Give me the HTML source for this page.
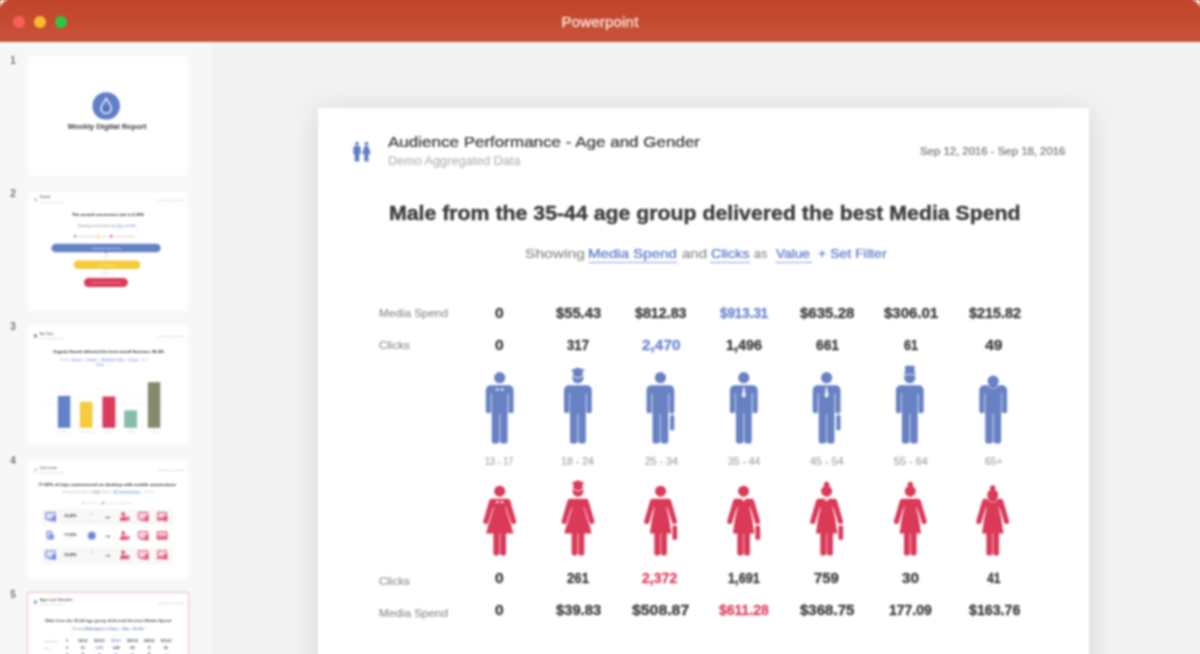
<!DOCTYPE html>
<html lang="en">
<head>
<meta charset="utf-8">
<title>Powerpoint</title>
<style>
*{box-sizing:border-box;margin:0;padding:0}
html,body{width:1200px;height:654px;overflow:hidden;background:#fff}
body{font-family:"Liberation Sans",sans-serif;position:relative}
.stage{position:absolute;left:-10px;top:-10px;width:1220px;height:684px;filter:blur(.9px)}
.ext{position:absolute;left:0;top:0;width:1220px;height:684px;background:linear-gradient(90deg,#f7f7f7 222px,#f2f2f2 222px)}
.tbx{position:absolute;left:0;top:0;width:1220px;height:51.6px;background:linear-gradient(#c0442a 10px,#c8533a)}
.hl{position:absolute;left:0;top:51.6px;width:1220px;height:6px;background:linear-gradient(rgba(255,255,255,.6),rgba(255,255,255,0))}
.cm{position:absolute;top:10px}
.win{position:absolute;left:10px;top:10px;width:1200px;height:674px}
.tb{position:absolute;left:0;top:0;width:1200px;height:41px}
.tb .t{position:absolute;left:0;width:1200px;top:13.6px;text-align:center;font-size:15px;line-height:16px;letter-spacing:.2px;color:#fde9e2;-webkit-text-stroke:.25px}
.dot{position:absolute;top:15.5px;width:12px;height:12px;border-radius:50%}
.side{position:absolute;left:0;top:41px;width:212px;height:633px}
.num{position:absolute;left:8px;width:10px;text-align:center;font-size:10px;line-height:12px;font-weight:bold;color:#747474}
.th{position:absolute;left:28px;width:160px;height:118px;background:#fff;overflow:hidden}
.abs{position:absolute}
.slide{position:absolute;left:318px;top:108px;width:771px;height:570px;background:#fff;box-shadow:0 3px 26px rgba(0,0,0,.12)}
.slide,.mini,.tb .t,.num{will-change:transform}
.slide div,.mini div{position:absolute;white-space:nowrap}
.x{line-height:0;transform-origin:0 0;-webkit-text-stroke:.2px}
.b{font-weight:bold;-webkit-text-stroke:.35px}
</style>
</head>
<body>
<div class="stage">
<div class="ext"></div>
<div class="tbx"></div>
<div class="hl"></div>
<svg class="cm" style="left:10px" width="9" height="9" viewBox="0 0 9 9"><path d="M0 0h9A9 9 0 0 0 0 9z" fill="#fff"/></svg>
<svg class="cm" style="left:1201px" width="9" height="9" viewBox="0 0 9 9"><path d="M9 0H0a9 9 0 0 1 9 9z" fill="#fff"/></svg>
<div class="win">
  <div class="tb">
    <div class="dot" style="left:13px;background:#f9605a"></div>
    <div class="dot" style="left:33.6px;background:#fbbb2d"></div>
    <div class="dot" style="left:55px;background:#29c840"></div>
    <div class="t">Powerpoint</div>
  </div>
  <div class="side">
    <div class="num" style="top:13.8px">1</div>
    <div class="th" style="top:15px;height:120px" id="t1">
<div class="mini" style="position:absolute;left:0;top:0;width:772px;height:600px;transform:scale(.2073);transform-origin:0 0">
<svg style="position:absolute;left:310.2px;top:174.1px" width="134.1" height="134.1" viewBox="0 0 28 28"><circle cx="14" cy="14" r="13.9" fill="#5f7fc8"/><path d="M14 6.6c-1.6 3.4-5.2 6-5.2 9.7a5.2 5.2 0 0 0 10.4 0c0-3.7-3.6-6.3-5.2-9.7z" fill="none" stroke="#fff" stroke-opacity=".88" stroke-width="1.5"/><circle cx="14" cy="16.4" r="2.3" fill="#4f6fba"/></svg>
<div class="x b" style="left:192.47px;top:341.22px;font-size:34px;color:#444;transform:scaleX(1.0877)">Weekly Digital Report</div>
</div>
</div>
    <div class="num" style="top:146.5px">2</div>
    <div class="th" style="top:151px;height:118.6px" id="t2">
<div class="mini" style="position:absolute;left:0;top:0;width:772px;height:600px;transform:scale(.2073);transform-origin:0 0">
<div style="left:28.0px;top:28.5px;width:16.4px;height:17.8px;background:#cfcfd8;border-radius:8px;"></div>
<div style="left:428.8px;top:174.1px;width:39.1px;height:1.4px;background:#a9b8e6;border-radius:0px;"></div>
<div style="left:221.9px;top:207.9px;width:9.6px;height:11.6px;background:#5f7fc8;border-radius:2px;"></div>
<div style="left:334.3px;top:207.9px;width:11.1px;height:11.6px;background:#f4cf3d;border-radius:2px;"></div>
<div style="left:395.6px;top:207.9px;width:10.6px;height:11.6px;background:#dc3c5a;border-radius:2px;"></div>
<div style="left:112.9px;top:249.9px;width:526.8px;height:41.5px;background:#6482c6;border-radius:30px;"></div>
<div style="left:369.5px;top:291.4px;width:0;height:0;border-left:7.7px solid transparent;border-right:7.7px solid transparent;border-top:7.7px solid #4f6cb4"></div>
<div style="left:221.4px;top:329.5px;width:320.3px;height:41.5px;background:#f6cb3c;border-radius:30px;"></div>
<div style="left:369.5px;top:371.0px;width:0;height:0;border-left:7.7px solid transparent;border-right:7.7px solid transparent;border-top:7.7px solid #d9ae22"></div>
<div style="left:270.1px;top:414.9px;width:212.3px;height:43.4px;background:#dc3a5a;border-radius:30px;"></div>
<div class="x" style="left:56.80px;top:25.44px;font-size:15px;color:#555;transform:scaleX(1.0833)">Funnel</div>
<div class="x" style="left:57.89px;top:47.57px;font-size:12px;color:#c4c4c4;transform:scaleX(0.9350)">Demo Aggregated Data</div>
<div class="x" style="left:627.11px;top:39.80px;font-size:10.5px;color:#b5b5b5;transform:scaleX(0.9330)">Sep 12, 2016 - Sep 18, 2016</div>
<div class="x b" style="left:212.25px;top:107.73px;font-size:20px;color:#404040;transform:scaleX(1.0073)">The overall conversion rate is 0.18%</div>
<div class="x" style="left:241.20px;top:166.76px;font-size:13.5px;color:#9a9a9a;transform:scaleX(1.1615)">Showing funnel metrics by</div>
<div class="x" style="left:428.85px;top:166.76px;font-size:13.5px;color:#7d95d8;transform:scaleX(0.8908)">Value + Set Filter</div>
<div class="x" style="left:235.84px;top:213.64px;font-size:11px;color:#b5b5b5;transform:scaleX(1.5014)">Impressions</div>
<div class="x" style="left:352.15px;top:213.64px;font-size:11px;color:#b5b5b5;transform:scaleX(1.2128)">Clicks</div>
<div class="x" style="left:412.45px;top:213.64px;font-size:11px;color:#b5b5b5;transform:scaleX(1.7061)">Conversions</div>
<div class="x b" style="left:308.73px;top:270.92px;font-size:12px;color:#dfe6f7;transform:scaleX(1.0952)">2,481,043 Impressions</div>
<div class="x" style="left:356.97px;top:311.38px;font-size:10.5px;color:#c9c9c9;transform:scaleX(1.3110)">1.32%</div>
<div class="x b" style="left:340.09px;top:350.51px;font-size:12px;color:#fdf3c8;transform:scaleX(1.0830)">32,749 Clicks</div>
<div class="x" style="left:350.22px;top:391.46px;font-size:10.5px;color:#bdbdbd;transform:scaleX(1.5896)">13.6%</div>
<div class="x b" style="left:306.32px;top:436.86px;font-size:12px;color:#f3a5b4;transform:scaleX(1.3151)">4,454 Conversions</div>
</div>
</div>
    <div class="num" style="top:280px">3</div>
    <div class="th" style="top:283.5px;height:120.5px" id="t3">
<div class="mini" style="position:absolute;left:0;top:0;width:772px;height:600px;transform:scale(.2073);transform-origin:0 0">
<div style="left:28.0px;top:43.9px;width:16.4px;height:17.8px;background:#7c93d6;border-radius:8px;"></div>
<div style="left:212.3px;top:176.6px;width:48.2px;height:1.9px;background:#a9b8e6;border-radius:0px;"></div>
<div style="left:283.2px;top:176.6px;width:44.9px;height:1.9px;background:#a9b8e6;border-radius:0px;"></div>
<div style="left:357.0px;top:176.6px;width:106.1px;height:1.9px;background:#a9b8e6;border-radius:0px;"></div>
<div style="left:482.4px;top:176.6px;width:48.2px;height:1.9px;background:#a9b8e6;border-radius:0px;"></div>
<div style="left:76.7px;top:268.5px;width:598.6px;height:1.7px;background:#ececec;border-radius:0px;"></div>
<div style="left:76.7px;top:327.3px;width:598.6px;height:1.7px;background:#ececec;border-radius:0px;"></div>
<div style="left:76.7px;top:382.3px;width:598.6px;height:1.7px;background:#ececec;border-radius:0px;"></div>
<div style="left:76.7px;top:436.8px;width:598.6px;height:1.7px;background:#ececec;border-radius:0px;"></div>
<div style="left:76.7px;top:492.8px;width:598.6px;height:1.7px;background:#ececec;border-radius:0px;"></div>
<div style="left:143.8px;top:341.5px;width:59.8px;height:154.8px;background:#6482c6;border-radius:0px;"></div>
<div style="left:250.4px;top:370.5px;width:60.8px;height:125.9px;background:#f6cb3c;border-radius:0px;"></div>
<div style="left:358.9px;top:344.9px;width:61.7px;height:151.5px;background:#dc3a5a;border-radius:0px;"></div>
<div style="left:464.1px;top:412.0px;width:61.7px;height:84.4px;background:#86bcae;border-radius:0px;"></div>
<div style="left:577.9px;top:276.4px;width:59.8px;height:220.0px;background:#848a6c;border-radius:0px;"></div>
<div class="x" style="left:56.88px;top:40.87px;font-size:15px;color:#555;transform:scaleX(1.0021)">Bar Chart</div>
<div class="x" style="left:57.89px;top:63.01px;font-size:12px;color:#c4c4c4;transform:scaleX(0.9350)">Demo Aggregated Data</div>
<div class="x" style="left:627.11px;top:55.23px;font-size:10.5px;color:#b5b5b5;transform:scaleX(0.9330)">Sep 12, 2016 - Sep 18, 2016</div>
<div class="x b" style="left:122.05px;top:126.06px;font-size:20px;color:#404040;transform:scaleX(0.9533)">Organic Search delivered the best overall Sessions: 45,291</div>
<div class="x" style="left:154.37px;top:170.62px;font-size:13.5px;color:#c4c4c4;transform:scaleX(0.9972)">Showing</div>
<div class="x" style="left:212.25px;top:170.62px;font-size:13.5px;color:#7d95d8;transform:scaleX(0.8766)">Sessions</div>
<div class="x" style="left:266.28px;top:170.62px;font-size:13.5px;color:#c4c4c4;transform:scaleX(0.7980)">by</div>
<div class="x" style="left:283.16px;top:170.62px;font-size:13.5px;color:#7d95d8;transform:scaleX(0.8921)">Channel</div>
<div class="x" style="left:334.78px;top:170.62px;font-size:13.5px;color:#c4c4c4;transform:scaleX(0.9494)">for</div>
<div class="x" style="left:356.97px;top:170.62px;font-size:13.5px;color:#7d95d8;transform:scaleX(0.9824)">All Website Traffic</div>
<div class="x" style="left:467.92px;top:170.62px;font-size:13.5px;color:#c4c4c4;transform:scaleX(0.7315)">as</div>
<div class="x" style="left:482.39px;top:170.62px;font-size:13.5px;color:#7d95d8;transform:scaleX(1.0484)">Column</div>
<div class="x" style="left:537.87px;top:170.62px;font-size:13.5px;color:#d0d0d0;transform:scaleX(0.6709)">+ Set Filter</div>
<div class="x" style="left:326.58px;top:191.84px;font-size:13.5px;color:#8ea3de;transform:scaleX(1.1688)">Value</div>
<div class="x" style="left:151.95px;top:512.38px;font-size:10px;color:#d2d2d2;transform:scaleX(1.6486)">Direct</div>
<div class="x" style="left:241.20px;top:512.38px;font-size:10px;color:#d2d2d2;transform:scaleX(1.1550)">Organic Search</div>
<div class="x" style="left:364.21px;top:512.38px;font-size:10px;color:#d2d2d2;transform:scaleX(1.4331)">Referral</div>
<div class="x" style="left:472.74px;top:512.38px;font-size:10px;color:#d2d2d2;transform:scaleX(1.6071)">Social</div>
<div class="x" style="left:586.11px;top:512.38px;font-size:10px;color:#d2d2d2;transform:scaleX(1.7518)">Email</div>
</div>
</div>
    <div class="num" style="top:414px">4</div>
    <div class="th" style="top:419px;height:118.6px" id="t4">
<div class="mini" style="position:absolute;left:0;top:0;width:772px;height:600px;transform:scale(.2073);transform-origin:0 0">
<div style="left:28.0px;top:40.0px;width:16.4px;height:17.8px;background:#d2d2da;border-radius:8px;"></div>
<div style="left:308.7px;top:159.7px;width:41.5px;height:1.9px;background:#a9b8e6;border-radius:0px;"></div>
<div style="left:412.4px;top:159.7px;width:129.3px;height:1.9px;background:#a9b8e6;border-radius:0px;"></div>
<div style="left:261.5px;top:201.6px;width:6.8px;height:10.6px;background:#a9b8e6;border-radius:2px;"></div>
<div style="left:358.9px;top:200.7px;width:6.8px;height:12.5px;background:#e0466a;border-radius:2px;"></div>
<div style="left:67.5px;top:237.8px;width:633.4px;height:74.3px;background:#f8f8f8;border-radius:14px;"></div>
<div style="left:67.5px;top:421.1px;width:633.4px;height:80.6px;background:#f8f8f8;border-radius:14px;"></div>
<svg style="position:absolute;left:79.6px;top:248.4px" width="62.7" height="53.1" viewBox="0 0 13 11"><rect x="1" y="1" width="9.6" height="6.8" rx=".8" fill="#dde3f8" stroke="#7488d8" stroke-width="1.1"/><rect x="3.4" y="8.6" width="4.8" height="1" fill="#7488d8"/><rect x="7.8" y="4.6" width="3.6" height="5.4" rx=".6" fill="#7488d8"/></svg>
<div style="left:180.9px;top:286.1px;width:48.2px;height:2.4px;background:#e2e2e2;border-radius:0px;"></div>
<div style="left:300.5px;top:252.8px;width:9.2px;height:16.4px;background:#dcdce4;border-radius:3px;"></div>
<div style="left:275.0px;top:295.2px;width:60.3px;height:2.9px;background:#e9e9e9;border-radius:0px;"></div>
<div style="left:371.4px;top:276.2px;width:17.4px;height:3.4px;background:#6e6e6e;border-radius:0px;"></div>
<div style="left:385.9px;top:270.1px;width:0;height:0;border-top:7.7px solid transparent;border-bottom:7.7px solid transparent;border-left:11.6px solid #6e6e6e"></div>
<svg style="position:absolute;left:438.0px;top:248.4px" width="62.7" height="53.1" viewBox="0 0 13 11"><circle cx="4.4" cy="2.6" r="2" fill="#e3587a"/><path d="M1 9.6c0-3 1.4-4.6 3.4-4.6s3.4 1.6 3.4 4.6z" fill="#e3587a"/><rect x="5.6" y="5.2" width="5.2" height="4.2" rx=".6" fill="#e3587a" fill-opacity=".8"/></svg>
<div style="left:439.5px;top:301.0px;width:59.8px;height:2.4px;background:#efe3e6;border-radius:0px;"></div>
<svg style="position:absolute;left:526.8px;top:248.4px" width="62.7" height="53.1" viewBox="0 0 13 11"><rect x="1" y="1" width="9.6" height="6.8" rx=".8" fill="#fad7df" stroke="#e3587a" stroke-width="1.1"/><rect x="3.4" y="8.6" width="4.8" height="1" fill="#e3587a"/><rect x="7.8" y="4.6" width="3.6" height="5.4" rx=".6" fill="#e3587a"/></svg>
<div style="left:528.2px;top:301.0px;width:59.8px;height:2.4px;background:#efe3e6;border-radius:0px;"></div>
<svg style="position:absolute;left:618.4px;top:248.4px" width="62.7" height="53.1" viewBox="0 0 13 11"><rect x="1.6" y="1" width="8.6" height="6" rx=".7" fill="#fad7df" stroke="#e3587a" stroke-width="1.1"/><rect x=".4" y="7.6" width="11" height="1.6" rx=".6" fill="#e3587a"/><rect x="7.6" y="4.4" width="3.8" height="5.4" rx=".6" fill="#e3587a"/></svg>
<div style="left:619.9px;top:301.0px;width:59.8px;height:2.4px;background:#efe3e6;border-radius:0px;"></div>
<svg style="position:absolute;left:79.6px;top:340.1px" width="62.7" height="53.1" viewBox="0 0 13 11"><rect x="2.6" y=".6" width="4.6" height="7.6" rx=".9" fill="#dde3f8" stroke="#7488d8" stroke-width="1.1"/><circle cx="6.8" cy="6.6" r="3" fill="#7488d8" fill-opacity=".75"/></svg>
<div style="left:180.9px;top:377.7px;width:48.2px;height:2.4px;background:#e2e2e2;border-radius:0px;"></div>
<div style="left:287.5px;top:345.4px;width:39.6px;height:39.6px;border-radius:50%;background:#6f83d6;box-shadow:inset 0 0 0 5.8px #98a7e3"></div>
<div style="left:371.4px;top:367.8px;width:17.4px;height:3.4px;background:#6e6e6e;border-radius:0px;"></div>
<div style="left:385.9px;top:361.8px;width:0;height:0;border-top:7.7px solid transparent;border-bottom:7.7px solid transparent;border-left:11.6px solid #6e6e6e"></div>
<svg style="position:absolute;left:438.0px;top:340.1px" width="62.7" height="53.1" viewBox="0 0 13 11"><circle cx="4.4" cy="2.6" r="2" fill="#e3587a"/><path d="M1 9.6c0-3 1.4-4.6 3.4-4.6s3.4 1.6 3.4 4.6z" fill="#e3587a"/><rect x="5.6" y="5.2" width="5.2" height="4.2" rx=".6" fill="#e3587a" fill-opacity=".8"/></svg>
<svg style="position:absolute;left:526.8px;top:340.1px" width="62.7" height="53.1" viewBox="0 0 13 11"><rect x="1" y="1" width="9.6" height="6.8" rx=".8" fill="#fad7df" stroke="#e3587a" stroke-width="1.1"/><rect x="3.4" y="8.6" width="4.8" height="1" fill="#e3587a"/><rect x="7.8" y="4.6" width="3.6" height="5.4" rx=".6" fill="#e3587a"/></svg>
<svg style="position:absolute;left:618.4px;top:340.1px" width="62.7" height="53.1" viewBox="0 0 13 11"><rect x="1" y="1.4" width="10" height="7.4" rx=".9" fill="#fad7df" stroke="#e3587a" stroke-width="1.1"/><rect x="1" y="5" width="10" height="3.8" fill="#e3587a" fill-opacity=".8"/></svg>
<svg style="position:absolute;left:79.6px;top:433.2px" width="62.7" height="53.1" viewBox="0 0 13 11"><rect x="1" y="1" width="9.6" height="6.8" rx=".8" fill="#dde3f8" stroke="#7488d8" stroke-width="1.1"/><rect x="3.4" y="8.6" width="4.8" height="1" fill="#7488d8"/><rect x="7.8" y="4.6" width="3.6" height="5.4" rx=".6" fill="#7488d8"/></svg>
<div style="left:180.9px;top:470.8px;width:48.2px;height:2.4px;background:#e2e2e2;border-radius:0px;"></div>
<div style="left:300.5px;top:437.5px;width:9.2px;height:16.4px;background:#dcdce4;border-radius:3px;"></div>
<div style="left:275.0px;top:480.0px;width:60.3px;height:2.9px;background:#e9e9e9;border-radius:0px;"></div>
<div style="left:371.4px;top:460.9px;width:17.4px;height:3.4px;background:#6e6e6e;border-radius:0px;"></div>
<div style="left:385.9px;top:454.9px;width:0;height:0;border-top:7.7px solid transparent;border-bottom:7.7px solid transparent;border-left:11.6px solid #6e6e6e"></div>
<svg style="position:absolute;left:438.0px;top:433.2px" width="62.7" height="53.1" viewBox="0 0 13 11"><circle cx="4.4" cy="2.6" r="2" fill="#e3587a"/><path d="M1 9.6c0-3 1.4-4.6 3.4-4.6s3.4 1.6 3.4 4.6z" fill="#e3587a"/><rect x="5.6" y="5.2" width="5.2" height="4.2" rx=".6" fill="#e3587a" fill-opacity=".8"/></svg>
<div style="left:439.5px;top:485.8px;width:59.8px;height:2.4px;background:#efe3e6;border-radius:0px;"></div>
<svg style="position:absolute;left:526.8px;top:433.2px" width="62.7" height="53.1" viewBox="0 0 13 11"><rect x="1" y="1" width="9.6" height="6.8" rx=".8" fill="#fad7df" stroke="#e3587a" stroke-width="1.1"/><rect x="3.4" y="8.6" width="4.8" height="1" fill="#e3587a"/><rect x="7.8" y="4.6" width="3.6" height="5.4" rx=".6" fill="#e3587a"/></svg>
<div style="left:528.2px;top:485.8px;width:59.8px;height:2.4px;background:#efe3e6;border-radius:0px;"></div>
<svg style="position:absolute;left:618.4px;top:433.2px" width="62.7" height="53.1" viewBox="0 0 13 11"><rect x="1.6" y="1" width="8.6" height="6" rx=".7" fill="#fad7df" stroke="#e3587a" stroke-width="1.1"/><rect x=".4" y="7.6" width="11" height="1.6" rx=".6" fill="#e3587a"/><rect x="7.6" y="4.4" width="3.8" height="5.4" rx=".6" fill="#e3587a"/></svg>
<div style="left:619.9px;top:485.8px;width:59.8px;height:2.4px;background:#efe3e6;border-radius:0px;"></div>
<div class="x" style="left:57.18px;top:37.01px;font-size:15px;color:#555;transform:scaleX(0.7069)">Device Crossover</div>
<div class="x" style="left:57.89px;top:59.15px;font-size:12px;color:#c4c4c4;transform:scaleX(0.9350)">Demo Aggregated Data</div>
<div class="x" style="left:627.11px;top:51.38px;font-size:10.5px;color:#b5b5b5;transform:scaleX(0.9330)">Sep 12, 2016 - Sep 18, 2016</div>
<div class="x b" style="left:48.72px;top:117.38px;font-size:20px;color:#404040;transform:scaleX(1.0826)">77.82% of trips commenced on desktop with mobile conversions</div>
<div class="x" style="left:164.50px;top:153.73px;font-size:13.5px;color:#c4c4c4;transform:scaleX(0.9319)">Showing device paths by</div>
<div class="x" style="left:308.73px;top:153.73px;font-size:13.5px;color:#7d95d8;transform:scaleX(1.1445)">Clicks</div>
<div class="x" style="left:356.97px;top:153.73px;font-size:13.5px;color:#c4c4c4;transform:scaleX(2.9670)">for</div>
<div class="x" style="left:412.45px;top:153.73px;font-size:13.5px;color:#7d95d8;transform:scaleX(1.0486)">All Converting Users</div>
<div class="x" style="left:547.52px;top:153.73px;font-size:13.5px;color:#d4d4d4;transform:scaleX(0.8896)">+ Set Filter</div>
<div class="x" style="left:272.07px;top:206.88px;font-size:11px;color:#c9c9c9;transform:scaleX(1.0580)">First Interaction</div>
<div class="x" style="left:371.44px;top:206.88px;font-size:11px;color:#c9c9c9;transform:scaleX(1.1802)">Converting Interaction</div>
<div class="x b" style="left:174.63px;top:272.22px;font-size:13px;color:#555;transform:scaleX(1.3432)">34.49%</div>
<div class="x b" style="left:174.63px;top:363.88px;font-size:13px;color:#555;transform:scaleX(1.3432)">77.82%</div>
<div class="x b" style="left:174.63px;top:456.98px;font-size:13px;color:#555;transform:scaleX(1.3432)">34.49%</div>
</div>
</div>
    <div class="num" style="top:548.1px">5</div>
    <div class="th" style="top:552px;height:120px;box-shadow:0 0 0 1.2px #f4c4c8" id="t5"><div class="mini" style="position:absolute;left:0;top:0;width:772px;height:600px;transform:scale(.2073);transform-origin:0 0">
<div style="left:28.0px;top:35.2px;width:16.4px;height:17.8px;background:#8a9edb;border-radius:8px;"></div>
<div class="x" style="left:57.89px;top:32.19px;font-size:15px;color:#555;transform:scaleX(1.4241)">Age and Gender</div>
<div class="x" style="left:57.89px;top:54.32px;font-size:12px;color:#c4c4c4;transform:scaleX(0.9350)">Demo Aggregated Data</div>
<div class="x" style="left:627.11px;top:46.55px;font-size:10.5px;color:#b5b5b5;transform:scaleX(0.9330)">Sep 12, 2016 - Sep 18, 2016</div>
<div style="left:0;top:27px;width:772px;height:560px;transform:scaleX(.962);transform-origin:386px 0;opacity:.82">
<div class="x b" style="left:71.30px;top:105.30px;font-size:19.4px;color:#3b3b3b;transform:scaleX(1.0977)">Male from the 35-44 age group delivered the best Media Spend</div>
<div class="x" style="left:207.20px;top:145.80px;font-size:13.5px;color:#8d8d8d;transform:scaleX(1.1565)">Showing</div>
<div class="x" style="left:270.08px;top:145.80px;font-size:13.5px;color:#6c86d0;transform:scaleX(1.1160);text-shadow:0 0 .3px #6c86d0">Media Spend</div>
<div class="x" style="left:363.50px;top:145.80px;font-size:13.5px;color:#8d8d8d;transform:scaleX(1.1128)">and</div>
<div class="x" style="left:392.70px;top:145.80px;font-size:13.5px;color:#6c86d0;transform:scaleX(1.0649);text-shadow:0 0 .3px #6c86d0">Clicks</div>
<div class="x" style="left:436.40px;top:145.80px;font-size:13.5px;color:#8d8d8d;transform:scaleX(0.9167)">as</div>
<div class="x" style="left:457.60px;top:145.80px;font-size:13.5px;color:#6c86d0;transform:scaleX(1.0116);text-shadow:0 0 .3px #6c86d0">Value</div>
<div class="x" style="left:500.30px;top:145.80px;font-size:13.5px;color:#6c86d0;transform:scaleX(1.0446);text-shadow:0 0 .3px #6c86d0">+ Set Filter</div>
<div class="x" style="left:60.50px;top:204.90px;font-size:11px;color:#929292;transform:scaleX(1.0664)">Media Spend</div>
<div class="x" style="left:60.50px;top:237.00px;font-size:11px;color:#929292;transform:scaleX(1.0459)">Clicks</div>
<div class="x" style="left:60.50px;top:473.00px;font-size:11px;color:#929292;transform:scaleX(1.0459)">Clicks</div>
<div class="x" style="left:60.50px;top:504.50px;font-size:11px;color:#929292;transform:scaleX(1.0664)">Media Spend</div>
<div class="x b" style="left:177.00px;top:205.10px;font-size:13.9px;color:#3f3f3f;transform:scaleX(1.1250)">0</div>
<div class="x b" style="left:237.60px;top:205.10px;font-size:13.9px;color:#3f3f3f;transform:scaleX(1.0617)">$55.43</div>
<div class="x b" style="left:317.00px;top:205.10px;font-size:13.9px;color:#3f3f3f;transform:scaleX(1.0260)">$812.83</div>
<div class="x b" style="left:402.40px;top:205.10px;font-size:13.9px;color:#6f88d2;transform:scaleX(0.9607)">$913.31</div>
<div class="x b" style="left:481.70px;top:205.10px;font-size:13.9px;color:#3f3f3f;transform:scaleX(1.0835)">$635.28</div>
<div class="x b" style="left:566.20px;top:205.10px;font-size:13.9px;color:#3f3f3f;transform:scaleX(1.0775)">$306.01</div>
<div class="x b" style="left:650.60px;top:205.10px;font-size:13.9px;color:#3f3f3f;transform:scaleX(1.0340)">$215.82</div>
<div class="x b" style="left:177.00px;top:237.10px;font-size:13.9px;color:#3f3f3f;transform:scaleX(1.1250)">0</div>
<div class="x b" style="left:249.00px;top:237.10px;font-size:13.9px;color:#3f3f3f;transform:scaleX(0.9467)">317</div>
<div class="x b" style="left:323.50px;top:237.10px;font-size:13.9px;color:#6f88d2;transform:scaleX(1.1075)">2,470</div>
<div class="x b" style="left:407.50px;top:237.10px;font-size:13.9px;color:#3f3f3f;transform:scaleX(1.0361)">1,496</div>
<div class="x b" style="left:497.60px;top:237.10px;font-size:13.9px;color:#3f3f3f;transform:scaleX(0.9936)">661</div>
<div class="x b" style="left:586.00px;top:237.10px;font-size:13.9px;color:#3f3f3f;transform:scaleX(0.9030)">61</div>
<div class="x b" style="left:666.80px;top:237.10px;font-size:13.9px;color:#3f3f3f;transform:scaleX(1.1319)">49</div>
<div class="x b" style="left:177.00px;top:470.10px;font-size:13.9px;color:#3f3f3f;transform:scaleX(1.1250)">0</div>
<div class="x b" style="left:249.00px;top:470.10px;font-size:13.9px;color:#3f3f3f;transform:scaleX(0.9467)">261</div>
<div class="x b" style="left:324.00px;top:470.10px;font-size:13.9px;color:#e04864;transform:scaleX(1.0133)">2,372</div>
<div class="x b" style="left:409.80px;top:470.10px;font-size:13.9px;color:#3f3f3f;transform:scaleX(0.9191)">1,691</div>
<div class="x b" style="left:496.20px;top:470.10px;font-size:13.9px;color:#3f3f3f;transform:scaleX(1.0746)">759</div>
<div class="x b" style="left:583.80px;top:470.10px;font-size:13.9px;color:#3f3f3f;transform:scaleX(1.0938)">30</div>
<div class="x b" style="left:668.80px;top:470.10px;font-size:13.9px;color:#3f3f3f;transform:scaleX(0.8648)">41</div>
<div class="x b" style="left:177.00px;top:502.00px;font-size:13.9px;color:#3f3f3f;transform:scaleX(1.1250)">0</div>
<div class="x b" style="left:237.60px;top:502.00px;font-size:13.9px;color:#3f3f3f;transform:scaleX(1.0617)">$39.83</div>
<div class="x b" style="left:314.10px;top:502.00px;font-size:13.9px;color:#3f3f3f;transform:scaleX(1.1389)">$508.87</div>
<div class="x b" style="left:401.30px;top:502.00px;font-size:13.9px;color:#e04864;transform:scaleX(1.0077)">$611.28</div>
<div class="x b" style="left:481.70px;top:502.00px;font-size:13.9px;color:#3f3f3f;transform:scaleX(1.0835)">$368.75</div>
<div class="x b" style="left:571.30px;top:502.00px;font-size:13.9px;color:#3f3f3f;transform:scaleX(1.0079)">177.09</div>
<div class="x b" style="left:650.60px;top:502.00px;font-size:13.9px;color:#3f3f3f;transform:scaleX(1.0221)">$163.76</div>
<div class="x" style="left:167.20px;top:353.90px;font-size:10.2px;color:#a6a6a6;transform:scaleX(0.8892)">13 - 17</div>
<div class="x" style="left:243.20px;top:353.90px;font-size:10.2px;color:#a6a6a6;transform:scaleX(1.0390)">18 - 24</div>
<div class="x" style="left:326.80px;top:353.90px;font-size:10.2px;color:#a6a6a6;transform:scaleX(1.0359)">25 - 34</div>
<div class="x" style="left:410.00px;top:353.90px;font-size:10.2px;color:#a6a6a6;transform:scaleX(1.0203)">35 - 44</div>
<div class="x" style="left:492.10px;top:353.90px;font-size:10.2px;color:#a6a6a6;transform:scaleX(1.0546)">45 - 54</div>
<div class="x" style="left:576.20px;top:353.90px;font-size:10.2px;color:#a6a6a6;transform:scaleX(1.0671)">55 - 64</div>
<div class="x" style="left:667.40px;top:353.90px;font-size:10.2px;color:#a6a6a6;transform:scaleX(1.0155)">65+</div>
<div style="left:270.5px;top:153.7px;width:88.7px;height:1.3px;background:#8ea1dc"></div>
<div style="left:392.0px;top:153.7px;width:40.0px;height:1.3px;background:#8ea1dc"></div>
<div style="left:456.5px;top:153.7px;width:37.5px;height:1.3px;background:#8ea1dc"></div>
<svg style="position:absolute;left:152px;top:257px" width="560" height="82" viewBox="0 0 560 82"><g transform="translate(29.7 0)"><g fill="#6781c3"><circle cx="0" cy="12.7" r="5.6"/><path d="M-13.9 25.2a4.9 4.9 0 0 1 4.9-4.9h18a4.9 4.9 0 0 1 4.9 4.9v20.5a2.5 2.5 0 0 1-5 0v-17.2h-1v20h-15.8v-20h-1v17.2a2.5 2.5 0 0 1-5 0z"/><path d="M-8.9 28.5h1v19.5h-1zM7.9 28.5h1v19.5h-1z" opacity=".45"/><path d="M-7.9 47h7.4v29.3a2.2 2.2 0 0 1-2.2 2.2h-3a2.2 2.2 0 0 1-2.2-2.2zM.5 47h7.4v29.3a2.2 2.2 0 0 1-2.2 2.2h-3a2.2 2.2 0 0 1-2.2-2.2z"/><path d="M-.5 47h1v30h-1z" opacity=".45"/></g><g fill="#fff"><path d="M-3.6 23l3.6 1.5 3.6-1.5v3.1l-3.6-1.5-3.6 1.5z"/></g></g><g transform="translate(107.9 0)"><g fill="#6781c3"><circle cx="0" cy="12.7" r="5.6"/><path d="M-13.9 25.2a4.9 4.9 0 0 1 4.9-4.9h18a4.9 4.9 0 0 1 4.9 4.9v20.5a2.5 2.5 0 0 1-5 0v-17.2h-1v20h-15.8v-20h-1v17.2a2.5 2.5 0 0 1-5 0z"/><path d="M-8.9 28.5h1v19.5h-1zM7.9 28.5h1v19.5h-1z" opacity=".45"/><path d="M-7.9 47h7.4v29.3a2.2 2.2 0 0 1-2.2 2.2h-3a2.2 2.2 0 0 1-2.2-2.2zM.5 47h7.4v29.3a2.2 2.2 0 0 1-2.2 2.2h-3a2.2 2.2 0 0 1-2.2-2.2z"/><path d="M-.5 47h1v30h-1z" opacity=".45"/><path d="M0 2.4l7.6 2.9-7.6 2.9-7.6-2.9z"/><path d="M-4.8 6.4h9.6v4h-9.6z"/></g><g fill="#fff"><path d="M-5.2 10.6q5.2 4.2 10.4 0" fill="none" stroke="#fff" stroke-width="1.1" opacity=".85"/></g></g><g transform="translate(190.4 0)"><g fill="#6781c3"><circle cx="0" cy="12.7" r="5.6"/><path d="M-13.9 25.2a4.9 4.9 0 0 1 4.9-4.9h18a4.9 4.9 0 0 1 4.9 4.9v20.5a2.5 2.5 0 0 1-5 0v-17.2h-1v20h-15.8v-20h-1v17.2a2.5 2.5 0 0 1-5 0z"/><path d="M-8.9 28.5h1v19.5h-1zM7.9 28.5h1v19.5h-1z" opacity=".45"/><path d="M-7.9 47h7.4v29.3a2.2 2.2 0 0 1-2.2 2.2h-3a2.2 2.2 0 0 1-2.2-2.2zM.5 47h7.4v29.3a2.2 2.2 0 0 1-2.2 2.2h-3a2.2 2.2 0 0 1-2.2-2.2z"/><path d="M-.5 47h1v30h-1z" opacity=".45"/><rect x="9.7" y="50.6" width="4.2" height="14.6" rx="1.3"/><rect x="11" y="48.6" width="1.6" height="3"/></g><g fill="#fff"></g></g><g transform="translate(273.8 0)"><g fill="#6781c3"><circle cx="0" cy="12.7" r="5.6"/><path d="M-13.9 25.2a4.9 4.9 0 0 1 4.9-4.9h18a4.9 4.9 0 0 1 4.9 4.9v20.5a2.5 2.5 0 0 1-5 0v-17.2h-1v20h-15.8v-20h-1v17.2a2.5 2.5 0 0 1-5 0z"/><path d="M-8.9 28.5h1v19.5h-1zM7.9 28.5h1v19.5h-1z" opacity=".45"/><path d="M-7.9 47h7.4v29.3a2.2 2.2 0 0 1-2.2 2.2h-3a2.2 2.2 0 0 1-2.2-2.2zM.5 47h7.4v29.3a2.2 2.2 0 0 1-2.2 2.2h-3a2.2 2.2 0 0 1-2.2-2.2z"/><path d="M-.5 47h1v30h-1z" opacity=".45"/></g><g fill="#fff"><path d="M-1.3 22.4h2.6l-.5 2.2 1.3 6.1-2.1 2.3-2.1-2.3 1.3-6.1z" opacity=".92"/></g></g><g transform="translate(356.6 0)"><g fill="#6781c3"><circle cx="0" cy="12.7" r="5.6"/><path d="M-13.9 25.2a4.9 4.9 0 0 1 4.9-4.9h18a4.9 4.9 0 0 1 4.9 4.9v20.5a2.5 2.5 0 0 1-5 0v-17.2h-1v20h-15.8v-20h-1v17.2a2.5 2.5 0 0 1-5 0z"/><path d="M-8.9 28.5h1v19.5h-1zM7.9 28.5h1v19.5h-1z" opacity=".45"/><path d="M-7.9 47h7.4v29.3a2.2 2.2 0 0 1-2.2 2.2h-3a2.2 2.2 0 0 1-2.2-2.2zM.5 47h7.4v29.3a2.2 2.2 0 0 1-2.2 2.2h-3a2.2 2.2 0 0 1-2.2-2.2z"/><path d="M-.5 47h1v30h-1z" opacity=".45"/><rect x="9.7" y="50.6" width="4.2" height="14.6" rx="1.3"/><rect x="11" y="48.6" width="1.6" height="3"/></g><g fill="#fff"><path d="M-1.3 22.4h2.6l-.5 2.2 1.3 6.1-2.1 2.3-2.1-2.3 1.3-6.1z" opacity=".92"/></g></g><g transform="translate(439.8 0)"><g fill="#6781c3"><circle cx="0" cy="12.7" r="5.6"/><path d="M-13.9 25.2a4.9 4.9 0 0 1 4.9-4.9h18a4.9 4.9 0 0 1 4.9 4.9v20.5a2.5 2.5 0 0 1-5 0v-17.2h-1v20h-15.8v-20h-1v17.2a2.5 2.5 0 0 1-5 0z"/><path d="M-8.9 28.5h1v19.5h-1zM7.9 28.5h1v19.5h-1z" opacity=".45"/><path d="M-7.9 47h7.4v29.3a2.2 2.2 0 0 1-2.2 2.2h-3a2.2 2.2 0 0 1-2.2-2.2zM.5 47h7.4v29.3a2.2 2.2 0 0 1-2.2 2.2h-3a2.2 2.2 0 0 1-2.2-2.2z"/><path d="M-.5 47h1v30h-1z" opacity=".45"/><path d="M-4.7 .8h9.4v7h1.1v2h-11.6v-2h1.1z"/></g><g fill="#fff"><path d="M-5.8 9.1h11.6v1h-11.6z" opacity=".85"/></g></g><g transform="translate(523.2 0)"><g fill="#6781c3"><circle cx="0" cy="16.2" r="5.6"/><path d="M-13.9 25.2a4.9 4.9 0 0 1 4.9-4.9h18a4.9 4.9 0 0 1 4.9 4.9v20.5a2.5 2.5 0 0 1-5 0v-17.2h-1v20h-15.8v-20h-1v17.2a2.5 2.5 0 0 1-5 0z"/><path d="M-8.9 28.5h1v19.5h-1zM7.9 28.5h1v19.5h-1z" opacity=".45"/><path d="M-7.9 47h7.4v29.3a2.2 2.2 0 0 1-2.2 2.2h-3a2.2 2.2 0 0 1-2.2-2.2zM.5 47h7.4v29.3a2.2 2.2 0 0 1-2.2 2.2h-3a2.2 2.2 0 0 1-2.2-2.2z"/><path d="M-.5 47h1v30h-1z" opacity=".45"/></g><g fill="#fff"><path d="M-6.3 17.2a6.3 6.3 0 0 0 12.6 0" fill="none" stroke="#fff" stroke-width="1" opacity=".55"/></g></g></svg>
<svg style="position:absolute;left:152px;top:370px" width="560" height="82" viewBox="0 0 560 82"><g transform="translate(29.7 0)"><g fill="#da3957"><circle cx="0" cy="13.2" r="5.5"/><path d="M-7.9 23.3L-13.8 43.4M7.9 23.3L13.8 43.4" stroke="#da3957" stroke-width="5.2" stroke-linecap="round" fill="none"/><path d="M-6.5 20.7h13a1.5 1.5 0 0 1 1.5 1.5l-1.2 6.5 6.8 26.8h-27.2l6.8-26.8-1.2-6.5a1.5 1.5 0 0 1 1.5-1.5z"/><path d="M-6.3 55h5.8v20.5a2 2 0 0 1-2 2h-1.8a2 2 0 0 1-2-2zM.5 55h5.8v20.5a2 2 0 0 1-2 2h-1.8a2 2 0 0 1-2-2z"/><path d="M-.5 55.5h1v21h-1z" opacity=".45"/></g><g fill="#fff"><path d="M-5.7 29.5L-10.9 46M5.7 29.5L10.9 46" stroke="#fff" stroke-width="1" opacity=".55" fill="none"/><path d="M-3.5 22.5l3.5 1.4 3.5-1.4v3l-3.5-1.4-3.5 1.4z"/></g></g><g transform="translate(108.0 0)"><g fill="#da3957"><circle cx="0" cy="13.2" r="5.5"/><path d="M-7.9 23.3L-13.8 43.4M7.9 23.3L13.8 43.4" stroke="#da3957" stroke-width="5.2" stroke-linecap="round" fill="none"/><path d="M-6.5 20.7h13a1.5 1.5 0 0 1 1.5 1.5l-1.2 6.5 6.8 26.8h-27.2l6.8-26.8-1.2-6.5a1.5 1.5 0 0 1 1.5-1.5z"/><path d="M-6.3 55h5.8v20.5a2 2 0 0 1-2 2h-1.8a2 2 0 0 1-2-2zM.5 55h5.8v20.5a2 2 0 0 1-2 2h-1.8a2 2 0 0 1-2-2z"/><path d="M-.5 55.5h1v21h-1z" opacity=".45"/><path d="M0 2.3l6.8 2.7-6.8 2.7-6.8-2.7z"/><path d="M-4.6 6h9.2v4.4h-9.2z"/></g><g fill="#fff"><path d="M-5.7 29.5L-10.9 46M5.7 29.5L10.9 46" stroke="#fff" stroke-width="1" opacity=".55" fill="none"/><path d="M-5 11q5 4 10 0" fill="none" stroke="#fff" stroke-width="1.1" opacity=".85"/></g></g><g transform="translate(190.6 0)"><g fill="#da3957"><circle cx="0" cy="13.2" r="5.5"/><path d="M-7.9 23.3L-13.8 43.4M7.9 23.3L13.8 43.4" stroke="#da3957" stroke-width="5.2" stroke-linecap="round" fill="none"/><path d="M-6.5 20.7h13a1.5 1.5 0 0 1 1.5 1.5l-1.2 6.5 3.9 26.8h-21.4l3.9-26.8-1.2-6.5a1.5 1.5 0 0 1 1.5-1.5z"/><path d="M-6.3 55h5.8v20.5a2 2 0 0 1-2 2h-1.8a2 2 0 0 1-2-2zM.5 55h5.8v20.5a2 2 0 0 1-2 2h-1.8a2 2 0 0 1-2-2z"/><path d="M-.5 55.5h1v21h-1z" opacity=".45"/><rect x="11.8" y="47.4" width="4.7" height="14.4" rx="1.4"/></g><g fill="#fff"><path d="M-5.7 29.5L-10.9 46M5.7 29.5L10.9 46" stroke="#fff" stroke-width="1" opacity=".55" fill="none"/><path d="M11.5 46.4h5.2v1h-5.2z" opacity=".6"/></g></g><g transform="translate(273.6 0)"><g fill="#da3957"><circle cx="0" cy="13.2" r="5.5"/><path d="M-7.9 23.3L-13.8 43.4M7.9 23.3L13.8 43.4" stroke="#da3957" stroke-width="5.2" stroke-linecap="round" fill="none"/><path d="M-6.5 20.7h13a1.5 1.5 0 0 1 1.5 1.5l-1.2 6.5 3.9 26.8h-21.4l3.9-26.8-1.2-6.5a1.5 1.5 0 0 1 1.5-1.5z"/><path d="M-6.3 55h5.8v20.5a2 2 0 0 1-2 2h-1.8a2 2 0 0 1-2-2zM.5 55h5.8v20.5a2 2 0 0 1-2 2h-1.8a2 2 0 0 1-2-2z"/><path d="M-.5 55.5h1v21h-1z" opacity=".45"/><rect x="11.8" y="47.4" width="4.7" height="14.4" rx="1.4"/></g><g fill="#fff"><path d="M-5.7 29.5L-10.9 46M5.7 29.5L10.9 46" stroke="#fff" stroke-width="1" opacity=".55" fill="none"/><path d="M11.5 46.4h5.2v1h-5.2z" opacity=".6"/><path d="M-2.6 20.4h5.2l-2.6 3.4z" opacity=".95"/></g></g><g transform="translate(356.6 0)"><g fill="#da3957"><circle cx="0" cy="13.2" r="5.5"/><path d="M-7.9 23.3L-13.8 43.4M7.9 23.3L13.8 43.4" stroke="#da3957" stroke-width="5.2" stroke-linecap="round" fill="none"/><path d="M-6.5 20.7h13a1.5 1.5 0 0 1 1.5 1.5l-1.2 6.5 3.9 26.8h-21.4l3.9-26.8-1.2-6.5a1.5 1.5 0 0 1 1.5-1.5z"/><path d="M-6.3 55h5.8v20.5a2 2 0 0 1-2 2h-1.8a2 2 0 0 1-2-2zM.5 55h5.8v20.5a2 2 0 0 1-2 2h-1.8a2 2 0 0 1-2-2z"/><path d="M-.5 55.5h1v21h-1z" opacity=".45"/><rect x="11.8" y="47.4" width="4.7" height="14.4" rx="1.4"/><circle cx="0" cy="6.4" r="2.7"/></g><g fill="#fff"><path d="M-5.7 29.5L-10.9 46M5.7 29.5L10.9 46" stroke="#fff" stroke-width="1" opacity=".55" fill="none"/><path d="M11.5 46.4h5.2v1h-5.2z" opacity=".6"/><path d="M-2.6 20.4h5.2l-2.6 3.4z" opacity=".95"/></g></g><g transform="translate(440.3 0)"><g fill="#da3957"><circle cx="0" cy="13.2" r="5.5"/><path d="M-7.9 23.3L-13.8 43.4M7.9 23.3L13.8 43.4" stroke="#da3957" stroke-width="5.2" stroke-linecap="round" fill="none"/><path d="M-6.5 20.7h13a1.5 1.5 0 0 1 1.5 1.5l-1.2 6.5 3.9 26.8h-21.4l3.9-26.8-1.2-6.5a1.5 1.5 0 0 1 1.5-1.5z"/><path d="M-6.3 55h5.8v20.5a2 2 0 0 1-2 2h-1.8a2 2 0 0 1-2-2zM.5 55h5.8v20.5a2 2 0 0 1-2 2h-1.8a2 2 0 0 1-2-2z"/><path d="M-.5 55.5h1v21h-1z" opacity=".45"/><circle cx="0" cy="6.4" r="2.7"/></g><g fill="#fff"><path d="M-5.7 29.5L-10.9 46M5.7 29.5L10.9 46" stroke="#fff" stroke-width="1" opacity=".55" fill="none"/></g></g><g transform="translate(522.7 0)"><g fill="#da3957"><circle cx="0" cy="16.8" r="5.5"/><path d="M-7.9 23.3L-13.8 43.4M7.9 23.3L13.8 43.4" stroke="#da3957" stroke-width="5.2" stroke-linecap="round" fill="none"/><path d="M-6.5 20.7h13a1.5 1.5 0 0 1 1.5 1.5l-1.2 6.5 3.9 26.8h-21.4l3.9-26.8-1.2-6.5a1.5 1.5 0 0 1 1.5-1.5z"/><path d="M-6.3 55h5.8v20.5a2 2 0 0 1-2 2h-1.8a2 2 0 0 1-2-2zM.5 55h5.8v20.5a2 2 0 0 1-2 2h-1.8a2 2 0 0 1-2-2z"/><path d="M-.5 55.5h1v21h-1z" opacity=".45"/><circle cx="0" cy="10" r="2.7"/></g><g fill="#fff"><path d="M-5.7 29.5L-10.9 46M5.7 29.5L10.9 46" stroke="#fff" stroke-width="1" opacity=".55" fill="none"/><path d="M-6.2 18a6.2 6.2 0 0 0 12.4 0" fill="none" stroke="#fff" stroke-width="1" opacity=".55"/></g></g></svg>
</div>
</div></div>
  </div>
  <div class="slide" id="slide">
<div class="x" style="left:70.20px;top:33.70px;font-size:15.2px;color:#4b4b4b;transform:scaleX(1.1199);text-shadow:0 0 .4px #4b4b4b">Audience Performance - Age and Gender</div>
<div class="x" style="left:70.30px;top:53.20px;font-size:12.1px;color:#b7b7b7;transform:scaleX(1.0476)">Demo Aggregated Data</div>
<div class="x" style="left:602.30px;top:43.40px;font-size:10.6px;color:#8a8a8a;transform:scaleX(1.0732);text-shadow:0 0 .4px #8a8a8a">Sep 12, 2016 - Sep 18, 2016</div>
<svg style="position:absolute;left:34px;top:33px" width="20" height="22" viewBox="0 0 20 22"><g fill="#5f7cc6"><circle cx="5" cy="2.6" r="1.9"/><path d="M1.4 7a2 2 0 0 1 2-2h3.2a2 2 0 0 1 2 2v6.2h-1.3v7.4h-4.6v-7.4h-1.3z"/><circle cx="14.4" cy="2.6" r="1.9"/><path d="M12.6 5h3.6l2.6 8h-2.3v7.6h-4.2v-7.6h-2.3z"/></g></svg>
<div class="x b" style="left:71.30px;top:105.30px;font-size:19.4px;color:#3b3b3b;transform:scaleX(1.0977)">Male from the 35-44 age group delivered the best Media Spend</div>
<div class="x" style="left:207.20px;top:145.80px;font-size:13.5px;color:#8d8d8d;transform:scaleX(1.1565)">Showing</div>
<div class="x" style="left:270.08px;top:145.80px;font-size:13.5px;color:#6c86d0;transform:scaleX(1.1160);text-shadow:0 0 .3px #6c86d0">Media Spend</div>
<div class="x" style="left:363.50px;top:145.80px;font-size:13.5px;color:#8d8d8d;transform:scaleX(1.1128)">and</div>
<div class="x" style="left:392.70px;top:145.80px;font-size:13.5px;color:#6c86d0;transform:scaleX(1.0649);text-shadow:0 0 .3px #6c86d0">Clicks</div>
<div class="x" style="left:436.40px;top:145.80px;font-size:13.5px;color:#8d8d8d;transform:scaleX(0.9167)">as</div>
<div class="x" style="left:457.60px;top:145.80px;font-size:13.5px;color:#6c86d0;transform:scaleX(1.0116);text-shadow:0 0 .3px #6c86d0">Value</div>
<div class="x" style="left:500.30px;top:145.80px;font-size:13.5px;color:#6c86d0;transform:scaleX(1.0446);text-shadow:0 0 .3px #6c86d0">+ Set Filter</div>
<div class="x" style="left:60.50px;top:204.90px;font-size:11px;color:#929292;transform:scaleX(1.0664)">Media Spend</div>
<div class="x" style="left:60.50px;top:237.00px;font-size:11px;color:#929292;transform:scaleX(1.0459)">Clicks</div>
<div class="x" style="left:60.50px;top:473.00px;font-size:11px;color:#929292;transform:scaleX(1.0459)">Clicks</div>
<div class="x" style="left:60.50px;top:504.50px;font-size:11px;color:#929292;transform:scaleX(1.0664)">Media Spend</div>
<div class="x b" style="left:177.00px;top:205.10px;font-size:13.9px;color:#3f3f3f;transform:scaleX(1.1250)">0</div>
<div class="x b" style="left:237.60px;top:205.10px;font-size:13.9px;color:#3f3f3f;transform:scaleX(1.0617)">$55.43</div>
<div class="x b" style="left:317.00px;top:205.10px;font-size:13.9px;color:#3f3f3f;transform:scaleX(1.0260)">$812.83</div>
<div class="x b" style="left:402.40px;top:205.10px;font-size:13.9px;color:#6f88d2;transform:scaleX(0.9607)">$913.31</div>
<div class="x b" style="left:481.70px;top:205.10px;font-size:13.9px;color:#3f3f3f;transform:scaleX(1.0835)">$635.28</div>
<div class="x b" style="left:566.20px;top:205.10px;font-size:13.9px;color:#3f3f3f;transform:scaleX(1.0775)">$306.01</div>
<div class="x b" style="left:650.60px;top:205.10px;font-size:13.9px;color:#3f3f3f;transform:scaleX(1.0340)">$215.82</div>
<div class="x b" style="left:177.00px;top:237.10px;font-size:13.9px;color:#3f3f3f;transform:scaleX(1.1250)">0</div>
<div class="x b" style="left:249.00px;top:237.10px;font-size:13.9px;color:#3f3f3f;transform:scaleX(0.9467)">317</div>
<div class="x b" style="left:323.50px;top:237.10px;font-size:13.9px;color:#6f88d2;transform:scaleX(1.1075)">2,470</div>
<div class="x b" style="left:407.50px;top:237.10px;font-size:13.9px;color:#3f3f3f;transform:scaleX(1.0361)">1,496</div>
<div class="x b" style="left:497.60px;top:237.10px;font-size:13.9px;color:#3f3f3f;transform:scaleX(0.9936)">661</div>
<div class="x b" style="left:586.00px;top:237.10px;font-size:13.9px;color:#3f3f3f;transform:scaleX(0.9030)">61</div>
<div class="x b" style="left:666.80px;top:237.10px;font-size:13.9px;color:#3f3f3f;transform:scaleX(1.1319)">49</div>
<div class="x b" style="left:177.00px;top:470.10px;font-size:13.9px;color:#3f3f3f;transform:scaleX(1.1250)">0</div>
<div class="x b" style="left:249.00px;top:470.10px;font-size:13.9px;color:#3f3f3f;transform:scaleX(0.9467)">261</div>
<div class="x b" style="left:324.00px;top:470.10px;font-size:13.9px;color:#e04864;transform:scaleX(1.0133)">2,372</div>
<div class="x b" style="left:409.80px;top:470.10px;font-size:13.9px;color:#3f3f3f;transform:scaleX(0.9191)">1,691</div>
<div class="x b" style="left:496.20px;top:470.10px;font-size:13.9px;color:#3f3f3f;transform:scaleX(1.0746)">759</div>
<div class="x b" style="left:583.80px;top:470.10px;font-size:13.9px;color:#3f3f3f;transform:scaleX(1.0938)">30</div>
<div class="x b" style="left:668.80px;top:470.10px;font-size:13.9px;color:#3f3f3f;transform:scaleX(0.8648)">41</div>
<div class="x b" style="left:177.00px;top:502.00px;font-size:13.9px;color:#3f3f3f;transform:scaleX(1.1250)">0</div>
<div class="x b" style="left:237.60px;top:502.00px;font-size:13.9px;color:#3f3f3f;transform:scaleX(1.0617)">$39.83</div>
<div class="x b" style="left:314.10px;top:502.00px;font-size:13.9px;color:#3f3f3f;transform:scaleX(1.1389)">$508.87</div>
<div class="x b" style="left:401.30px;top:502.00px;font-size:13.9px;color:#e04864;transform:scaleX(1.0077)">$611.28</div>
<div class="x b" style="left:481.70px;top:502.00px;font-size:13.9px;color:#3f3f3f;transform:scaleX(1.0835)">$368.75</div>
<div class="x b" style="left:571.30px;top:502.00px;font-size:13.9px;color:#3f3f3f;transform:scaleX(1.0079)">177.09</div>
<div class="x b" style="left:650.60px;top:502.00px;font-size:13.9px;color:#3f3f3f;transform:scaleX(1.0221)">$163.76</div>
<div class="x" style="left:167.20px;top:353.90px;font-size:10.2px;color:#a6a6a6;transform:scaleX(0.8892)">13 - 17</div>
<div class="x" style="left:243.20px;top:353.90px;font-size:10.2px;color:#a6a6a6;transform:scaleX(1.0390)">18 - 24</div>
<div class="x" style="left:326.80px;top:353.90px;font-size:10.2px;color:#a6a6a6;transform:scaleX(1.0359)">25 - 34</div>
<div class="x" style="left:410.00px;top:353.90px;font-size:10.2px;color:#a6a6a6;transform:scaleX(1.0203)">35 - 44</div>
<div class="x" style="left:492.10px;top:353.90px;font-size:10.2px;color:#a6a6a6;transform:scaleX(1.0546)">45 - 54</div>
<div class="x" style="left:576.20px;top:353.90px;font-size:10.2px;color:#a6a6a6;transform:scaleX(1.0671)">55 - 64</div>
<div class="x" style="left:667.40px;top:353.90px;font-size:10.2px;color:#a6a6a6;transform:scaleX(1.0155)">65+</div>
<div style="left:270.5px;top:153.7px;width:88.7px;height:1.3px;background:#8ea1dc"></div>
<div style="left:392.0px;top:153.7px;width:40.0px;height:1.3px;background:#8ea1dc"></div>
<div style="left:456.5px;top:153.7px;width:37.5px;height:1.3px;background:#8ea1dc"></div>
<svg style="position:absolute;left:152px;top:257px" width="560" height="82" viewBox="0 0 560 82"><g transform="translate(29.7 0)"><g fill="#6781c3"><circle cx="0" cy="12.7" r="5.6"/><path d="M-13.9 25.2a4.9 4.9 0 0 1 4.9-4.9h18a4.9 4.9 0 0 1 4.9 4.9v20.5a2.5 2.5 0 0 1-5 0v-17.2h-1v20h-15.8v-20h-1v17.2a2.5 2.5 0 0 1-5 0z"/><path d="M-8.9 28.5h1v19.5h-1zM7.9 28.5h1v19.5h-1z" opacity=".45"/><path d="M-7.9 47h7.4v29.3a2.2 2.2 0 0 1-2.2 2.2h-3a2.2 2.2 0 0 1-2.2-2.2zM.5 47h7.4v29.3a2.2 2.2 0 0 1-2.2 2.2h-3a2.2 2.2 0 0 1-2.2-2.2z"/><path d="M-.5 47h1v30h-1z" opacity=".45"/></g><g fill="#fff"><path d="M-3.6 23l3.6 1.5 3.6-1.5v3.1l-3.6-1.5-3.6 1.5z"/></g></g><g transform="translate(107.9 0)"><g fill="#6781c3"><circle cx="0" cy="12.7" r="5.6"/><path d="M-13.9 25.2a4.9 4.9 0 0 1 4.9-4.9h18a4.9 4.9 0 0 1 4.9 4.9v20.5a2.5 2.5 0 0 1-5 0v-17.2h-1v20h-15.8v-20h-1v17.2a2.5 2.5 0 0 1-5 0z"/><path d="M-8.9 28.5h1v19.5h-1zM7.9 28.5h1v19.5h-1z" opacity=".45"/><path d="M-7.9 47h7.4v29.3a2.2 2.2 0 0 1-2.2 2.2h-3a2.2 2.2 0 0 1-2.2-2.2zM.5 47h7.4v29.3a2.2 2.2 0 0 1-2.2 2.2h-3a2.2 2.2 0 0 1-2.2-2.2z"/><path d="M-.5 47h1v30h-1z" opacity=".45"/><path d="M0 2.4l7.6 2.9-7.6 2.9-7.6-2.9z"/><path d="M-4.8 6.4h9.6v4h-9.6z"/></g><g fill="#fff"><path d="M-5.2 10.6q5.2 4.2 10.4 0" fill="none" stroke="#fff" stroke-width="1.1" opacity=".85"/></g></g><g transform="translate(190.4 0)"><g fill="#6781c3"><circle cx="0" cy="12.7" r="5.6"/><path d="M-13.9 25.2a4.9 4.9 0 0 1 4.9-4.9h18a4.9 4.9 0 0 1 4.9 4.9v20.5a2.5 2.5 0 0 1-5 0v-17.2h-1v20h-15.8v-20h-1v17.2a2.5 2.5 0 0 1-5 0z"/><path d="M-8.9 28.5h1v19.5h-1zM7.9 28.5h1v19.5h-1z" opacity=".45"/><path d="M-7.9 47h7.4v29.3a2.2 2.2 0 0 1-2.2 2.2h-3a2.2 2.2 0 0 1-2.2-2.2zM.5 47h7.4v29.3a2.2 2.2 0 0 1-2.2 2.2h-3a2.2 2.2 0 0 1-2.2-2.2z"/><path d="M-.5 47h1v30h-1z" opacity=".45"/><rect x="9.7" y="50.6" width="4.2" height="14.6" rx="1.3"/><rect x="11" y="48.6" width="1.6" height="3"/></g><g fill="#fff"></g></g><g transform="translate(273.8 0)"><g fill="#6781c3"><circle cx="0" cy="12.7" r="5.6"/><path d="M-13.9 25.2a4.9 4.9 0 0 1 4.9-4.9h18a4.9 4.9 0 0 1 4.9 4.9v20.5a2.5 2.5 0 0 1-5 0v-17.2h-1v20h-15.8v-20h-1v17.2a2.5 2.5 0 0 1-5 0z"/><path d="M-8.9 28.5h1v19.5h-1zM7.9 28.5h1v19.5h-1z" opacity=".45"/><path d="M-7.9 47h7.4v29.3a2.2 2.2 0 0 1-2.2 2.2h-3a2.2 2.2 0 0 1-2.2-2.2zM.5 47h7.4v29.3a2.2 2.2 0 0 1-2.2 2.2h-3a2.2 2.2 0 0 1-2.2-2.2z"/><path d="M-.5 47h1v30h-1z" opacity=".45"/></g><g fill="#fff"><path d="M-1.3 22.4h2.6l-.5 2.2 1.3 6.1-2.1 2.3-2.1-2.3 1.3-6.1z" opacity=".92"/></g></g><g transform="translate(356.6 0)"><g fill="#6781c3"><circle cx="0" cy="12.7" r="5.6"/><path d="M-13.9 25.2a4.9 4.9 0 0 1 4.9-4.9h18a4.9 4.9 0 0 1 4.9 4.9v20.5a2.5 2.5 0 0 1-5 0v-17.2h-1v20h-15.8v-20h-1v17.2a2.5 2.5 0 0 1-5 0z"/><path d="M-8.9 28.5h1v19.5h-1zM7.9 28.5h1v19.5h-1z" opacity=".45"/><path d="M-7.9 47h7.4v29.3a2.2 2.2 0 0 1-2.2 2.2h-3a2.2 2.2 0 0 1-2.2-2.2zM.5 47h7.4v29.3a2.2 2.2 0 0 1-2.2 2.2h-3a2.2 2.2 0 0 1-2.2-2.2z"/><path d="M-.5 47h1v30h-1z" opacity=".45"/><rect x="9.7" y="50.6" width="4.2" height="14.6" rx="1.3"/><rect x="11" y="48.6" width="1.6" height="3"/></g><g fill="#fff"><path d="M-1.3 22.4h2.6l-.5 2.2 1.3 6.1-2.1 2.3-2.1-2.3 1.3-6.1z" opacity=".92"/></g></g><g transform="translate(439.8 0)"><g fill="#6781c3"><circle cx="0" cy="12.7" r="5.6"/><path d="M-13.9 25.2a4.9 4.9 0 0 1 4.9-4.9h18a4.9 4.9 0 0 1 4.9 4.9v20.5a2.5 2.5 0 0 1-5 0v-17.2h-1v20h-15.8v-20h-1v17.2a2.5 2.5 0 0 1-5 0z"/><path d="M-8.9 28.5h1v19.5h-1zM7.9 28.5h1v19.5h-1z" opacity=".45"/><path d="M-7.9 47h7.4v29.3a2.2 2.2 0 0 1-2.2 2.2h-3a2.2 2.2 0 0 1-2.2-2.2zM.5 47h7.4v29.3a2.2 2.2 0 0 1-2.2 2.2h-3a2.2 2.2 0 0 1-2.2-2.2z"/><path d="M-.5 47h1v30h-1z" opacity=".45"/><path d="M-4.7 .8h9.4v7h1.1v2h-11.6v-2h1.1z"/></g><g fill="#fff"><path d="M-5.8 9.1h11.6v1h-11.6z" opacity=".85"/></g></g><g transform="translate(523.2 0)"><g fill="#6781c3"><circle cx="0" cy="16.2" r="5.6"/><path d="M-13.9 25.2a4.9 4.9 0 0 1 4.9-4.9h18a4.9 4.9 0 0 1 4.9 4.9v20.5a2.5 2.5 0 0 1-5 0v-17.2h-1v20h-15.8v-20h-1v17.2a2.5 2.5 0 0 1-5 0z"/><path d="M-8.9 28.5h1v19.5h-1zM7.9 28.5h1v19.5h-1z" opacity=".45"/><path d="M-7.9 47h7.4v29.3a2.2 2.2 0 0 1-2.2 2.2h-3a2.2 2.2 0 0 1-2.2-2.2zM.5 47h7.4v29.3a2.2 2.2 0 0 1-2.2 2.2h-3a2.2 2.2 0 0 1-2.2-2.2z"/><path d="M-.5 47h1v30h-1z" opacity=".45"/></g><g fill="#fff"><path d="M-6.3 17.2a6.3 6.3 0 0 0 12.6 0" fill="none" stroke="#fff" stroke-width="1" opacity=".55"/></g></g></svg>
<svg style="position:absolute;left:152px;top:370px" width="560" height="82" viewBox="0 0 560 82"><g transform="translate(29.7 0)"><g fill="#da3957"><circle cx="0" cy="13.2" r="5.5"/><path d="M-7.9 23.3L-13.8 43.4M7.9 23.3L13.8 43.4" stroke="#da3957" stroke-width="5.2" stroke-linecap="round" fill="none"/><path d="M-6.5 20.7h13a1.5 1.5 0 0 1 1.5 1.5l-1.2 6.5 6.8 26.8h-27.2l6.8-26.8-1.2-6.5a1.5 1.5 0 0 1 1.5-1.5z"/><path d="M-6.3 55h5.8v20.5a2 2 0 0 1-2 2h-1.8a2 2 0 0 1-2-2zM.5 55h5.8v20.5a2 2 0 0 1-2 2h-1.8a2 2 0 0 1-2-2z"/><path d="M-.5 55.5h1v21h-1z" opacity=".45"/></g><g fill="#fff"><path d="M-5.7 29.5L-10.9 46M5.7 29.5L10.9 46" stroke="#fff" stroke-width="1" opacity=".55" fill="none"/><path d="M-3.5 22.5l3.5 1.4 3.5-1.4v3l-3.5-1.4-3.5 1.4z"/></g></g><g transform="translate(108.0 0)"><g fill="#da3957"><circle cx="0" cy="13.2" r="5.5"/><path d="M-7.9 23.3L-13.8 43.4M7.9 23.3L13.8 43.4" stroke="#da3957" stroke-width="5.2" stroke-linecap="round" fill="none"/><path d="M-6.5 20.7h13a1.5 1.5 0 0 1 1.5 1.5l-1.2 6.5 6.8 26.8h-27.2l6.8-26.8-1.2-6.5a1.5 1.5 0 0 1 1.5-1.5z"/><path d="M-6.3 55h5.8v20.5a2 2 0 0 1-2 2h-1.8a2 2 0 0 1-2-2zM.5 55h5.8v20.5a2 2 0 0 1-2 2h-1.8a2 2 0 0 1-2-2z"/><path d="M-.5 55.5h1v21h-1z" opacity=".45"/><path d="M0 2.3l6.8 2.7-6.8 2.7-6.8-2.7z"/><path d="M-4.6 6h9.2v4.4h-9.2z"/></g><g fill="#fff"><path d="M-5.7 29.5L-10.9 46M5.7 29.5L10.9 46" stroke="#fff" stroke-width="1" opacity=".55" fill="none"/><path d="M-5 11q5 4 10 0" fill="none" stroke="#fff" stroke-width="1.1" opacity=".85"/></g></g><g transform="translate(190.6 0)"><g fill="#da3957"><circle cx="0" cy="13.2" r="5.5"/><path d="M-7.9 23.3L-13.8 43.4M7.9 23.3L13.8 43.4" stroke="#da3957" stroke-width="5.2" stroke-linecap="round" fill="none"/><path d="M-6.5 20.7h13a1.5 1.5 0 0 1 1.5 1.5l-1.2 6.5 3.9 26.8h-21.4l3.9-26.8-1.2-6.5a1.5 1.5 0 0 1 1.5-1.5z"/><path d="M-6.3 55h5.8v20.5a2 2 0 0 1-2 2h-1.8a2 2 0 0 1-2-2zM.5 55h5.8v20.5a2 2 0 0 1-2 2h-1.8a2 2 0 0 1-2-2z"/><path d="M-.5 55.5h1v21h-1z" opacity=".45"/><rect x="11.8" y="47.4" width="4.7" height="14.4" rx="1.4"/></g><g fill="#fff"><path d="M-5.7 29.5L-10.9 46M5.7 29.5L10.9 46" stroke="#fff" stroke-width="1" opacity=".55" fill="none"/><path d="M11.5 46.4h5.2v1h-5.2z" opacity=".6"/></g></g><g transform="translate(273.6 0)"><g fill="#da3957"><circle cx="0" cy="13.2" r="5.5"/><path d="M-7.9 23.3L-13.8 43.4M7.9 23.3L13.8 43.4" stroke="#da3957" stroke-width="5.2" stroke-linecap="round" fill="none"/><path d="M-6.5 20.7h13a1.5 1.5 0 0 1 1.5 1.5l-1.2 6.5 3.9 26.8h-21.4l3.9-26.8-1.2-6.5a1.5 1.5 0 0 1 1.5-1.5z"/><path d="M-6.3 55h5.8v20.5a2 2 0 0 1-2 2h-1.8a2 2 0 0 1-2-2zM.5 55h5.8v20.5a2 2 0 0 1-2 2h-1.8a2 2 0 0 1-2-2z"/><path d="M-.5 55.5h1v21h-1z" opacity=".45"/><rect x="11.8" y="47.4" width="4.7" height="14.4" rx="1.4"/></g><g fill="#fff"><path d="M-5.7 29.5L-10.9 46M5.7 29.5L10.9 46" stroke="#fff" stroke-width="1" opacity=".55" fill="none"/><path d="M11.5 46.4h5.2v1h-5.2z" opacity=".6"/><path d="M-2.6 20.4h5.2l-2.6 3.4z" opacity=".95"/></g></g><g transform="translate(356.6 0)"><g fill="#da3957"><circle cx="0" cy="13.2" r="5.5"/><path d="M-7.9 23.3L-13.8 43.4M7.9 23.3L13.8 43.4" stroke="#da3957" stroke-width="5.2" stroke-linecap="round" fill="none"/><path d="M-6.5 20.7h13a1.5 1.5 0 0 1 1.5 1.5l-1.2 6.5 3.9 26.8h-21.4l3.9-26.8-1.2-6.5a1.5 1.5 0 0 1 1.5-1.5z"/><path d="M-6.3 55h5.8v20.5a2 2 0 0 1-2 2h-1.8a2 2 0 0 1-2-2zM.5 55h5.8v20.5a2 2 0 0 1-2 2h-1.8a2 2 0 0 1-2-2z"/><path d="M-.5 55.5h1v21h-1z" opacity=".45"/><rect x="11.8" y="47.4" width="4.7" height="14.4" rx="1.4"/><circle cx="0" cy="6.4" r="2.7"/></g><g fill="#fff"><path d="M-5.7 29.5L-10.9 46M5.7 29.5L10.9 46" stroke="#fff" stroke-width="1" opacity=".55" fill="none"/><path d="M11.5 46.4h5.2v1h-5.2z" opacity=".6"/><path d="M-2.6 20.4h5.2l-2.6 3.4z" opacity=".95"/></g></g><g transform="translate(440.3 0)"><g fill="#da3957"><circle cx="0" cy="13.2" r="5.5"/><path d="M-7.9 23.3L-13.8 43.4M7.9 23.3L13.8 43.4" stroke="#da3957" stroke-width="5.2" stroke-linecap="round" fill="none"/><path d="M-6.5 20.7h13a1.5 1.5 0 0 1 1.5 1.5l-1.2 6.5 3.9 26.8h-21.4l3.9-26.8-1.2-6.5a1.5 1.5 0 0 1 1.5-1.5z"/><path d="M-6.3 55h5.8v20.5a2 2 0 0 1-2 2h-1.8a2 2 0 0 1-2-2zM.5 55h5.8v20.5a2 2 0 0 1-2 2h-1.8a2 2 0 0 1-2-2z"/><path d="M-.5 55.5h1v21h-1z" opacity=".45"/><circle cx="0" cy="6.4" r="2.7"/></g><g fill="#fff"><path d="M-5.7 29.5L-10.9 46M5.7 29.5L10.9 46" stroke="#fff" stroke-width="1" opacity=".55" fill="none"/></g></g><g transform="translate(522.7 0)"><g fill="#da3957"><circle cx="0" cy="16.8" r="5.5"/><path d="M-7.9 23.3L-13.8 43.4M7.9 23.3L13.8 43.4" stroke="#da3957" stroke-width="5.2" stroke-linecap="round" fill="none"/><path d="M-6.5 20.7h13a1.5 1.5 0 0 1 1.5 1.5l-1.2 6.5 3.9 26.8h-21.4l3.9-26.8-1.2-6.5a1.5 1.5 0 0 1 1.5-1.5z"/><path d="M-6.3 55h5.8v20.5a2 2 0 0 1-2 2h-1.8a2 2 0 0 1-2-2zM.5 55h5.8v20.5a2 2 0 0 1-2 2h-1.8a2 2 0 0 1-2-2z"/><path d="M-.5 55.5h1v21h-1z" opacity=".45"/><circle cx="0" cy="10" r="2.7"/></g><g fill="#fff"><path d="M-5.7 29.5L-10.9 46M5.7 29.5L10.9 46" stroke="#fff" stroke-width="1" opacity=".55" fill="none"/><path d="M-6.2 18a6.2 6.2 0 0 0 12.4 0" fill="none" stroke="#fff" stroke-width="1" opacity=".55"/></g></g></svg>
  </div>
</div>
</div>
</body>
</html>
